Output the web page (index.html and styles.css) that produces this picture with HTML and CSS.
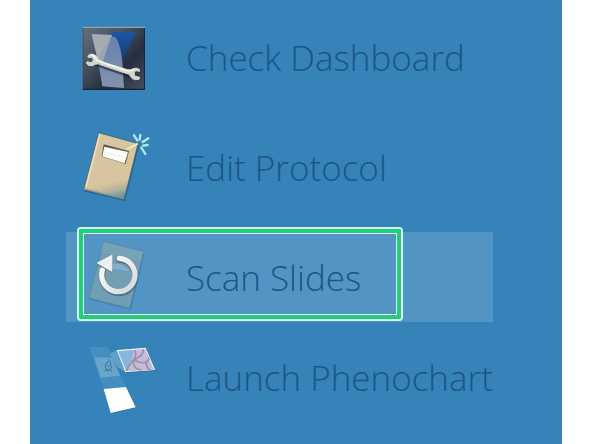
FILE: index.html
```html
<!DOCTYPE html>
<html lang="en">
<head>
<meta charset="utf-8">
<meta name="viewport" content="width=device-width, initial-scale=1">
<title>Launcher</title>
<link rel="stylesheet" href="styles.css">
</head>
<body>
<main class="panel">
  <button class="item" type="button">
    <svg class="icon" viewBox="-12 -9 300 270" aria-hidden="true">
      <defs>
        <linearGradient id="tile" x1="0" y1="0" x2="1" y2="1">
          <stop offset="0" stop-color="#66707c"/><stop offset=".35" stop-color="#475263"/><stop offset=".65" stop-color="#252e3e"/><stop offset="1" stop-color="#464b58"/>
        </linearGradient>
        <linearGradient id="beam" x1="0" y1="0" x2="0" y2="1">
          <stop offset="0" stop-color="#6682b0"/><stop offset="1" stop-color="#8592ae"/>
        </linearGradient>
        <linearGradient id="blue" x1="0" y1="0" x2="0" y2="1">
          <stop offset="0" stop-color="#1a57a8"/><stop offset="1" stop-color="#1b3a6c"/>
        </linearGradient>
      </defs>
      <rect x="37" y="36" width="188" height="189" fill="#172438"/>
      <rect x="40" y="39" width="182" height="182" fill="url(#tile)"/>
      <path d="M37 37H225" stroke="#a9bac6" stroke-width="3"/>
      <path d="M38 37V224" stroke="#7b8fa3" stroke-width="2"/>
      <path d="M120 50L197 53L160 135L146 90Z" fill="url(#blue)"/>
      <path d="M65 58L126 60L98 148L82 130Z" fill="#a3a8ae"/>
      <path d="M120 67Q134 62 139 70Q153 95 157 140L162 219L97 214L83 130Z" fill="url(#beam)"/>
      <path d="M65 58L126 60L96 146L82 126Z" fill="#a8acb1" opacity=".8"/>
      <path d="M74 145L188 184" stroke="#17202d" stroke-width="14" stroke-linecap="round" opacity=".6"/>
      <path d="M54 122Q62 114 72 119Q83 122 86 134L102 142L172 164Q182 166 188 162Q198 156 208 163L209 169L197 167L192 174L195 184L209 187L207 193Q195 197 186 190Q180 185 178 178L165 174L94 150Q84 144 76 148Q66 155 56 151L50 146L51 140L63 143L70 137L68 127L54 127Z" fill="#d6d8cd" stroke="#d6d8cd" stroke-width="3" stroke-linejoin="round"/>
      <path d="M62 120Q76 121 79 135L98 143L170 167Q184 169 192 163" fill="none" stroke="#fbfaf0" stroke-width="4"/>
    </svg>
    <span class="label">Check Dashboard</span>
  </button>

  <button class="item" type="button">
    <svg class="icon" viewBox="-12 6 300 270" aria-hidden="true">
      <defs>
        <linearGradient id="cover" x1=".3" y1="0" x2=".5" y2="1">
          <stop offset="0" stop-color="#d8c8a2"/><stop offset=".76" stop-color="#d5c49c"/><stop offset=".88" stop-color="#afb09e"/><stop offset="1" stop-color="#698d9b"/>
        </linearGradient>
      </defs>
      <path d="M87 40L208 75L165 243L41 214Z" fill="#174b70" opacity=".55"/>
      <path d="M86 38L204 71L162 240L41 209Z" fill="url(#cover)" stroke="#3d5965" stroke-width="2" stroke-linejoin="round"/>
      <path d="M89 43L48 202" stroke="#efe2c3" stroke-width="4"/>
      <path d="M46 207L160 236" stroke="#81939a" stroke-width="3"/>
      <path d="M170 88L204 71" stroke="#f3e6c6" stroke-width="6"/>
      <path d="M101 73L177 93L167 132L95 109Z" fill="#5e594a"/>
      <path d="M103 80L174 96L164 130L97 109Z" fill="#fff"/>
      <path d="M101 95L167 113" stroke="#e3e3df" stroke-width="2"/>
      <g stroke="#b9e5ef" stroke-width="7" stroke-linecap="round">
        <path d="M192 46L202 61M211 45L209 59M235 55L218 66M219 77L233 75M214 83L226 102"/>
      </g>
      <circle cx="208" cy="71" r="4" fill="#357c91"/>
    </svg>
    <span class="label">Edit Protocol</span>
  </button>

  <button class="item item-active" type="button">
    <svg class="icon" viewBox="18 36 300 270" aria-hidden="true">
      <defs>
        <linearGradient id="ring" x1="0" y1="0" x2="1" y2="1">
          <stop offset="0" stop-color="#fff"/><stop offset=".6" stop-color="#e7e7e9"/><stop offset="1" stop-color="#d2d4d8"/>
        </linearGradient>
      </defs>
      <path d="M133 68L254 98L213 269L86 238Z" fill="#34688e" opacity=".5"/>
      <path d="M131 65L251 95L209 265L87 234Z" fill="#719eb2" stroke="#5888a2" stroke-width="2"/>
      <path d="M131 65L251 95L244 124L122 97Z" fill="#84adbc" opacity=".35"/>
      <path d="M158 132Q188 126 208 154L155 146Z" fill="#8bb8dd" opacity=".7"/>
      <g fill="none" stroke-linecap="round">
        <path d="M178 119A50 50 0 1 1 128 155" stroke="#405f72" stroke-width="19" opacity=".7"/>
        <path d="M178 115A50 50 0 1 1 127 151" stroke="url(#ring)" stroke-width="16"/>
      </g>
      <path d="M111 133L158 108L156 158Z" fill="#405f72" opacity=".7"/>
      <path d="M112 129L156 106L155 154Z" fill="#f0f0f1" stroke="#f0f0f1" stroke-width="3" stroke-linejoin="round"/>
    </svg>
    <span class="label">Scan Slides</span>
    <span class="focus-frame"></span>
  </button>

  <button class="item item-last" type="button">
    <svg class="icon" viewBox="-27 -9 300 270" aria-hidden="true">
      <defs>
        <linearGradient id="slide" x1="0" y1="0" x2="0" y2="1">
          <stop offset="0" stop-color="#4590c0"/><stop offset="1" stop-color="#438dbf"/>
        </linearGradient>
        <clipPath id="map"><path d="M130 49L211 42L237 104L154 109Z"/></clipPath>
      </defs>
      <path d="M43 36L99 37L151 155L87 164Z" fill="url(#slide)"/>
      <path d="M57 67L112 68L135 122L77 128Z" fill="#67a6cb"/>
      <path d="M104 57L125 45L151 111L128 97Z" fill="#76b0d0" opacity=".65"/>
      <path d="M99 73Q108 79 106 87L110 95L105 105L94 103Q88 93 94 83L101 80M97 91L104 95M88 106L96 104L98 111M105 104L111 111" fill="none" stroke="#3f718f" stroke-width="3"/>
      <path d="M88 163L155 157L184 218L109 237Z" fill="#286f9f" opacity=".6"/>
      <path d="M86 162L153 156L182 217L107 234Z" fill="#fff"/>
      <path d="M127 47L214 40L243 107L153 114Z" fill="#286d99"/>
      <path d="M125 45L212 38L241 105L151 112Z" fill="#eef2f8"/>
      <g clip-path="url(#map)">
        <path d="M120 38H220L245 115H145Z" fill="#c7b9dc"/>
        <path d="M120 35H177L170 75L152 110L140 112Z" fill="#86b5df"/>
        <path d="M176 38Q188 62 176 74Q161 91 153 110M178 74Q194 88 214 81Q227 72 222 60M204 39Q207 57 193 65Q184 72 178 75M177 77Q172 93 188 102L203 108M215 82Q211 96 227 107" fill="none" stroke="#9793a3" stroke-width="5"/>
      </g>
    </svg>
    <span class="label">Launch Phenochart</span>
  </button>
</main>
</body>
</html>
```
FILE: styles.css
```css
* {
  box-sizing: border-box;
}

body {
  margin: 0;
  background: #fff;
}

.panel {
  display: flex;
  flex-direction: column;
  gap: 20px;
  min-height: 100vh;
  margin: 0 30px;
  padding: 12px 69px 12px 36px;
  background: #3583b9;
}

.item {
  position: relative;
  display: flex;
  align-items: center;
  gap: 20px;
  height: 90px;
  padding: 0;
  border: 0;
  background: transparent;
  color: #1b5685;
  font-family: "Open Sans", "Noto Sans", sans-serif;
  font-size: 35px;
  font-weight: 300;
  line-height: 48px;
  text-align: left;
  white-space: nowrap;
}

.item-active {
  background: #5295c4;
}

.item-last {
  margin-top: -10px;
}

.icon {
  flex: none;
  width: 100px;
  height: 90px;
}

.label {
  padding-top: 2px;
}

.focus-frame {
  position: absolute;
  top: -3px;
  right: 92px;
  bottom: 3px;
  left: 13px;
  border: 4px solid #20cf78;
  border-radius: 2px;
  box-shadow: 0 0 0 2px #d5fbef, inset 0 0 0 1px #e5fff8;
}
```
